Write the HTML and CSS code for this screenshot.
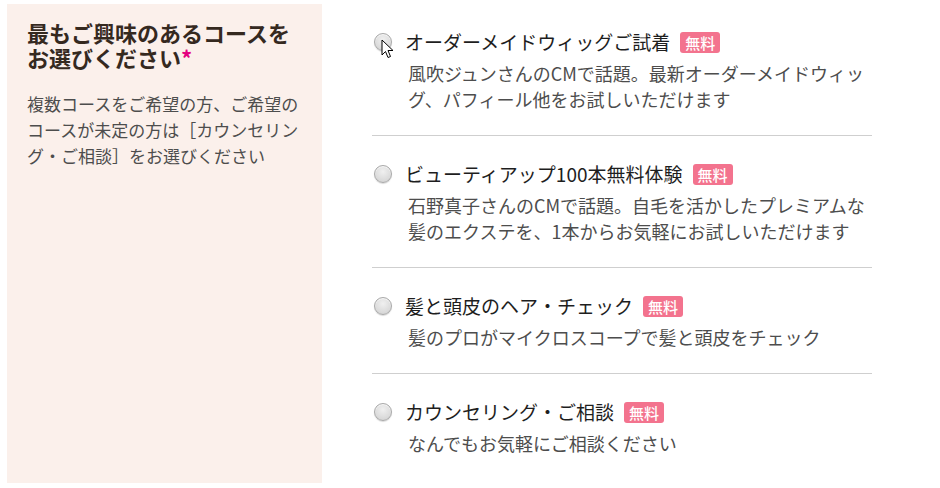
FILE: index.html
```html
<!DOCTYPE html>
<html lang="ja">
<head>
<meta charset="utf-8">
<link rel="stylesheet" href="styles.css">
</head>
<body>
<div class="page">
  <div class="side">
    <h2 class="side-title">最もご興味のあるコースをお選びください<span class="req">*</span></h2>
    <p class="side-note">複数コースをご希望の方、ご希望のコースが未定の方は［カウンセリング・ご相談］をお選びください</p>
  </div>
  <ul class="courses">
    <li class="course">
      <div class="course-head"><span class="radio"></span><span class="course-name">オーダーメイドウィッグご試着</span><span class="badge">無料</span></div>
      <p class="course-desc">風吹ジュンさんのCMで話題。最新オーダーメイドウィッグ、パフィール他をお試しいただけます</p>
      <svg class="cursor" width="13" height="20" viewBox="0 0 13 20"><path d="M1 1 L1 16 L4.5 12.5 L7 18.5 L9.5 17.5 L7 11.5 L12 11.5 Z" fill="#fff" stroke="#000" stroke-width="1" stroke-linejoin="miter"/></svg>
    </li>
    <li class="course">
      <div class="course-head"><span class="radio"></span><span class="course-name">ビューティアップ100本無料体験</span><span class="badge">無料</span></div>
      <p class="course-desc">石野真子さんのCMで話題。自毛を活かしたプレミアムな髪のエクステを、1本からお気軽にお試しいただけます</p>
    </li>
    <li class="course">
      <div class="course-head"><span class="radio"></span><span class="course-name">髪と頭皮のヘア・チェック</span><span class="badge">無料</span></div>
      <p class="course-desc">髪のプロがマイクロスコープで髪と頭皮をチェック</p>
    </li>
    <li class="course">
      <div class="course-head"><span class="radio"></span><span class="course-name">カウンセリング・ご相談</span><span class="badge">無料</span></div>
      <p class="course-desc">なんでもお気軽にご相談ください</p>
    </li>
  </ul>
</div>
</body>
</html>
```

FILE: styles.css
```css
* { box-sizing: border-box; }
html, body { margin: 0; padding: 0; background: #fff; }
body {
  font-family: "Noto Sans CJK JP", "Noto Sans", sans-serif;
  width: 940px;
  height: 488px;
  overflow: hidden;
}
.page {
  display: flex;
  align-items: flex-start;
  padding: 4px 0 0 7px;
}
.side {
  width: 315px;
  height: 479px;
  background: #fbf0eb;
  padding: 16px 18px 0 20px;
}
.side-title {
  margin: 0;
  font-size: 22px;
  line-height: 25px;
  font-weight: 700;
  color: #35291f;
}
.req { color: #e4007f; }
.side-note {
  margin: 21px 0 0;
  font-size: 17px;
  line-height: 26px;
  color: #4d4d4d;
}
.courses {
  list-style: none;
  margin: 0 0 0 50px;
  padding: 0;
  width: 500px;
}
.course {
  position: relative;
  padding: 25px 0 23px;
  border-bottom: 1px solid #cfcfcf;
}
.course:last-child { border-bottom: none; }
.course-head {
  display: flex;
  align-items: center;
  height: 26px;
}
.radio {
  width: 18px;
  height: 18px;
  border-radius: 50%;
  border: 1px solid #a9a9a9;
  background: radial-gradient(circle at 50% 35%, #f0f0f0 0%, #dcdcdc 60%, #cfcfcf 100%);
  box-shadow: inset 0 1px 1px rgba(255,255,255,0.8), 0 1px 1px rgba(0,0,0,0.15);
  margin: 0 0 0 2px;
  flex: none;
}
.course-name {
  margin-left: 13px;
  font-size: 19px;
  color: #1e1e1e;
  line-height: 26px;
}
.badge {
  margin-left: 10px;
  background: #f3738e;
  color: #fff;
  font-size: 15px;
  font-weight: 500;
  line-height: 21px;
  padding: 0 5px;
  border-radius: 3px;
}
.course-desc {
  margin: 5px 0 0 36px;
  font-size: 18px;
  line-height: 26px;
  color: #4d4d4d;
}
.cursor {
  position: absolute;
  left: 9px;
  top: 35px;
}
```
